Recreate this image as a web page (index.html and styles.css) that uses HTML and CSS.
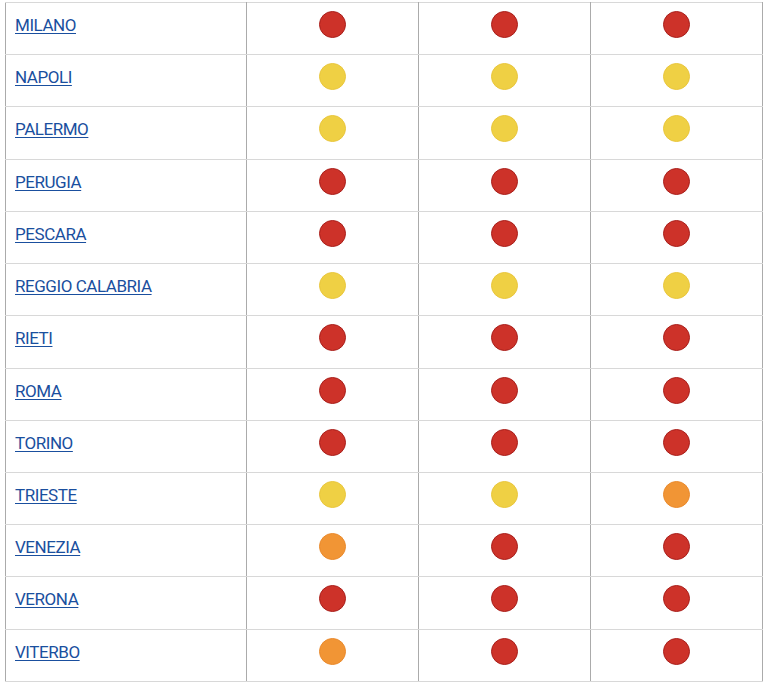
FILE: index.html
```html
<!DOCTYPE html>
<html lang="it">
<head>
<meta charset="utf-8">
<link rel="stylesheet" href="styles.css">
</head>
<body>
<div class="wrap">
<table class="grid">
<colgroup><col class="c-city"><col class="c-dot"><col class="c-dot"><col class="c-dot"></colgroup>
<tbody>
<tr><td><a href="#">MILANO</a></td><td><span class="dot red"></span></td><td><span class="dot red"></span></td><td><span class="dot red"></span></td></tr>
<tr><td><a href="#">NAPOLI</a></td><td><span class="dot yellow"></span></td><td><span class="dot yellow"></span></td><td><span class="dot yellow"></span></td></tr>
<tr><td><a href="#">PALERMO</a></td><td><span class="dot yellow"></span></td><td><span class="dot yellow"></span></td><td><span class="dot yellow"></span></td></tr>
<tr><td><a href="#">PERUGIA</a></td><td><span class="dot red"></span></td><td><span class="dot red"></span></td><td><span class="dot red"></span></td></tr>
<tr><td><a href="#">PESCARA</a></td><td><span class="dot red"></span></td><td><span class="dot red"></span></td><td><span class="dot red"></span></td></tr>
<tr><td><a href="#">REGGIO CALABRIA</a></td><td><span class="dot yellow"></span></td><td><span class="dot yellow"></span></td><td><span class="dot yellow"></span></td></tr>
<tr><td><a href="#">RIETI</a></td><td><span class="dot red"></span></td><td><span class="dot red"></span></td><td><span class="dot red"></span></td></tr>
<tr><td><a href="#">ROMA</a></td><td><span class="dot red"></span></td><td><span class="dot red"></span></td><td><span class="dot red"></span></td></tr>
<tr><td><a href="#">TORINO</a></td><td><span class="dot red"></span></td><td><span class="dot red"></span></td><td><span class="dot red"></span></td></tr>
<tr><td><a href="#">TRIESTE</a></td><td><span class="dot yellow"></span></td><td><span class="dot yellow"></span></td><td><span class="dot orange"></span></td></tr>
<tr><td><a href="#">VENEZIA</a></td><td><span class="dot orange"></span></td><td><span class="dot red"></span></td><td><span class="dot red"></span></td></tr>
<tr><td><a href="#">VERONA</a></td><td><span class="dot red"></span></td><td><span class="dot red"></span></td><td><span class="dot red"></span></td></tr>
<tr><td><a href="#">VITERBO</a></td><td><span class="dot orange"></span></td><td><span class="dot red"></span></td><td><span class="dot red"></span></td></tr>
</tbody>
</table>
</div>
</body>
</html>
```
FILE: styles.css
```css
html, body {
  margin: 0;
  padding: 0;
  background: #ffffff;
}
.wrap {
  padding: 2px 0 0 5px;
}
.grid {
  border-collapse: collapse;
  table-layout: fixed;
  width: 758px;
  font-family: Roboto, "Noto Sans", sans-serif;
}
.c-city { width: 241px; }
.c-dot { width: 172px; }
.grid tr {
  height: 52.23px;
}
.grid td {
  border-top: 1px solid #d8d8d8;
  border-bottom: 1px solid #d8d8d8;
  border-left: 1px solid #ababab;
  border-right: 1px solid #ababab;
  padding: 8px 9px 0 9px;
  vertical-align: top;
  box-sizing: border-box;
}
.grid a {
  font-size: 17px;
  line-height: 28px;
  letter-spacing: -0.45px;
  color: #1a4f9e;
  text-decoration: underline;
  text-underline-offset: 2px;
}
.dot {
  display: block;
  width: 27px;
  height: 27px;
  margin: 0 auto;
  border-radius: 50%;
  box-sizing: border-box;
  border: 1px solid transparent;
}
.red {
  background: #cd3229;
  border-color: #a91f1b;
}
.yellow {
  background: #efd044;
  border-color: #e9c63c;
}
.orange {
  background: #f19535;
  border-color: #ea8a2c;
}
```
